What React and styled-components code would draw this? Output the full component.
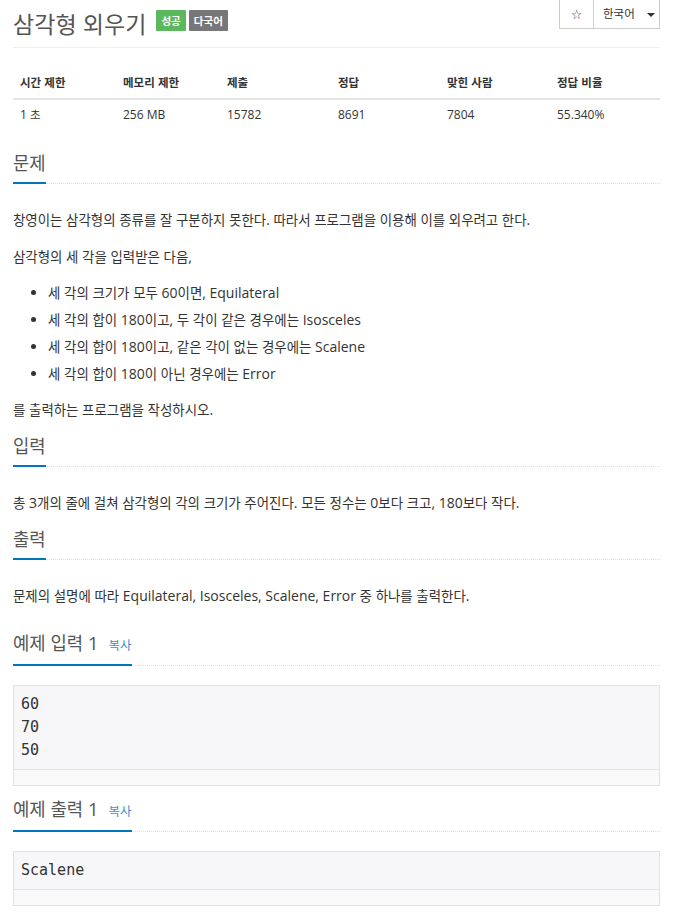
import React from 'react';
import styled, { createGlobalStyle } from 'styled-components';

const GlobalStyle = createGlobalStyle`
  body {
    margin: 0;
    background: #fff;
    font-family: 'Open Sans', 'Noto Sans CJK KR', sans-serif;
    color: #333;
  }
`;

// Hangul glyphs in the reference run a little narrower than Noto CJK
const Ko = styled.span`
  font-family: 'Noto Sans CJK KR', sans-serif;
  font-size: 0.96em;
  line-height: 1;
`;

const HANGUL = /([\u1100-\u11ff\u3130-\u318f\uac00-\ud7af]+)/;

function ko(text) {
  return text.split(HANGUL).map((part, i) => (i % 2 === 1 ? <Ko key={i}>{part}</Ko> : part));
}

const Page = styled.div`
  padding: 0 13px;
`;

const Header = styled.div`
  display: flex;
  justify-content: space-between;
  align-items: flex-start;
  height: 48px;
  box-sizing: border-box;
  border-bottom: 1px solid #eee;
`;

const TitleRow = styled.div`
  display: flex;
  align-items: flex-start;
  padding-top: 9px;
`;

const Title = styled.h1`
  margin: 0 10px 0 0;
  font-size: 24px;
  font-weight: normal;
  line-height: 30px;
  color: #555;
`;

const Label = styled.span`
  margin: 1px 3px 0 0;
  height: 21px;
  line-height: 21px;
  padding: 0 5px;
  font-size: 11px;
  font-weight: bold;
  color: #fff;
  background: ${(p) => p.$bg};
  border-radius: 1px;
`;

const ButtonGroup = styled.div`
  display: flex;
`;

const Button = styled.div`
  display: flex;
  align-items: center;
  justify-content: ${(p) => (p.$left ? 'flex-start' : 'center')};
  gap: 12px;
  width: ${(p) => p.$width}px;
  height: 29px;
  padding-left: ${(p) => (p.$left ? 9 : 0)}px;
  box-sizing: border-box;
  border: 1px solid #ccc;
  border-top: none;
  background: #fff;
  font-size: 12px;
  color: #333;
  & + & {
    margin-left: -1px;
  }
`;

const Star = styled.span`
  font-family: 'DejaVu Sans', sans-serif;
  font-size: 13px;
`;

const Caret = styled.span`
  width: 0;
  height: 0;
  margin-top: 2px;
  border-top: 4px solid #333;
  border-left: 4px solid transparent;
  border-right: 4px solid transparent;
`;

const InfoTable = styled.table`
  width: 100%;
  margin: 18px 0 18px;
  border-collapse: collapse;
  font-size: 12px;
  table-layout: fixed;
`;

const Th = styled.th`
  width: ${(p) => p.$width}px;
  box-sizing: border-box;
  padding: 9px 7px 7px;
  line-height: 16px;
  text-align: left;
  font-weight: bold;
  border-bottom: 2px solid #e5e5e5;
`;

const Td = styled.td`
  padding: 6px 7px 9px;
  line-height: 17px;
`;

const Section = styled.section`
  margin-top: ${(p) => p.$gap || 0}px;
`;

const SectionHeader = styled.div`
  border-bottom: 1px dotted #ddd;
`;

const Headline = styled.h2`
  display: inline-block;
  margin: 0 0 -1px;
  padding-bottom: 6px;
  font-size: 18.5px;
  font-weight: normal;
  line-height: 26px;
  color: #555;
  border-bottom: 2px solid #0076c0;
  vertical-align: bottom;
`;

const CopyLink = styled.a`
  margin-left: 10px;
  font-size: 13px;
  color: #3f8fd2;
  text-decoration: none;
`;

const Body = styled.div`
  padding-top: 22px;
  font-size: 14px;
  line-height: 27px;
  p {
    margin: 0 0 10px;
  }
`;

const List = styled.ul`
  margin: -1px 0 9px;
  padding-left: 35px;
`;

const SampleBox = styled.div`
  margin: 19px 0 10px;
  border: 1px solid #e1e1e8;
  background: #f7f7f9;
`;

const Pre = styled.pre`
  margin: 0;
  padding: 7px;
  font-family: 'DejaVu Sans Mono', monospace;
  font-size: 15px;
  line-height: 23px;
  color: #333;
`;

const ScrollTrack = styled.div`
  height: 15px;
  border-top: 1px solid #e5e5e5;
  background: #f9f9f9;
`;

const stats = [
  ['시간 제한', '1 초', 103],
  ['메모리 제한', '256 MB', 104],
  ['제출', '15782', 111],
  ['정답', '8691', 109],
  ['맞힌 사람', '7804', 110],
  ['정답 비율', '55.340%', 110],
];

const rules = [
  '세 각의 크기가 모두 60이면, Equilateral',
  '세 각의 합이 180이고, 두 각이 같은 경우에는 Isosceles',
  '세 각의 합이 180이고, 같은 각이 없는 경우에는 Scalene',
  '세 각의 합이 180이 아닌 경우에는 Error',
];

function Sample({ title, text, gap }) {
  return (
    <Section $gap={gap}>
      <SectionHeader>
        <Headline>
          {ko(title)}
          <CopyLink>{ko('복사')}</CopyLink>
        </Headline>
      </SectionHeader>
      <SampleBox>
        <Pre>{text}</Pre>
        <ScrollTrack />
      </SampleBox>
    </Section>
  );
}

export default function App() {
  return (
    <Page>
      <GlobalStyle />
      <Header>
        <TitleRow>
          <Title>{ko('삼각형 외우기')}</Title>
          <Label $bg="#5cb85c">{ko('성공')}</Label>
          <Label $bg="#777">{ko('다국어')}</Label>
        </TitleRow>
        <ButtonGroup>
          <Button $width={35}>
            <Star>☆</Star>
          </Button>
          <Button $width={67} $left>
            {ko('한국어')}
            <Caret />
          </Button>
        </ButtonGroup>
      </Header>

      <InfoTable>
        <thead>
          <tr>
            {stats.map(([head, , w]) => (
              <Th key={head} $width={w}>
                {ko(head)}
              </Th>
            ))}
          </tr>
        </thead>
        <tbody>
          <tr>
            {stats.map(([head, value]) => (
              <Td key={head}>{ko(value)}</Td>
            ))}
          </tr>
        </tbody>
      </InfoTable>

      <Section>
        <SectionHeader>
          <Headline>{ko('문제')}</Headline>
        </SectionHeader>
        <Body>
          <p>{ko('창영이는 삼각형의 종류를 잘 구분하지 못한다. 따라서 프로그램을 이용해 이를 외우려고 한다.')}</p>
          <p>{ko('삼각형의 세 각을 입력받은 다음,')}</p>
          <List>
            {rules.map((r) => (
              <li key={r}>{ko(r)}</li>
            ))}
          </List>
          <p>{ko('를 출력하는 프로그램을 작성하시오.')}</p>
        </Body>
      </Section>

      <Section>
        <SectionHeader>
          <Headline>{ko('입력')}</Headline>
        </SectionHeader>
        <Body>
          <p>{ko('총 3개의 줄에 걸쳐 삼각형의 각의 크기가 주어진다. 모든 정수는 0보다 크고, 180보다 작다.')}</p>
        </Body>
      </Section>

      <Section>
        <SectionHeader>
          <Headline>{ko('출력')}</Headline>
        </SectionHeader>
        <Body>
          <p>{ko('문제의 설명에 따라 Equilateral, Isosceles, Scalene, Error 중 하나를 출력한다.')}</p>
        </Body>
      </Section>

      <Sample title="예제 입력 1" text={'60\n70\n50'} gap={21} />
      <Sample title="예제 출력 1" text="Scalene" />
    </Page>
  );
}
